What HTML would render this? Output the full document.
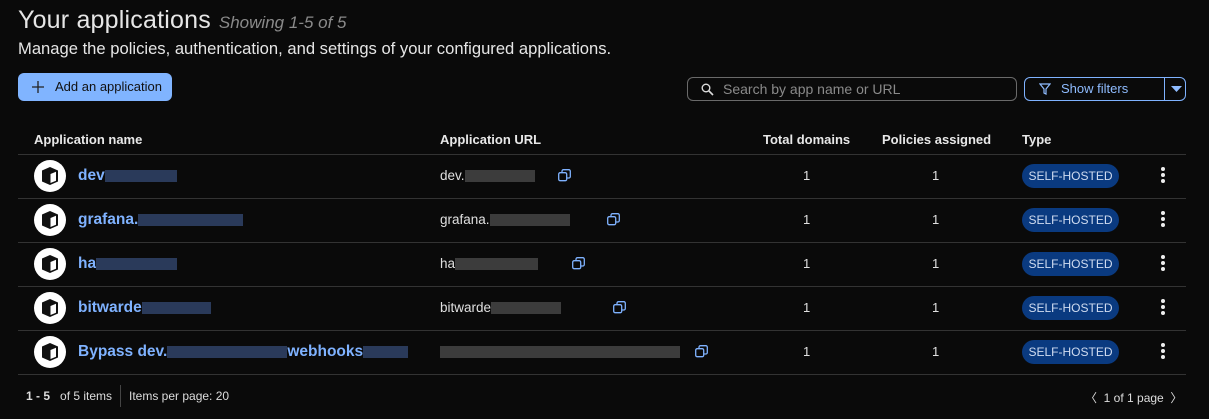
<!DOCTYPE html>
<html><head><meta charset="utf-8"><style>
*{box-sizing:border-box;margin:0;padding:0}
body{width:1209px;height:419px;background:#0a0a0a;color:#e8e8e8;font-family:"Liberation Sans",sans-serif;position:relative;overflow:hidden}
.a{position:absolute;white-space:nowrap}
h1{position:absolute;left:18px;top:6px;font-size:25px;font-weight:normal;color:#e6e6e6;letter-spacing:0.2px}
h1 span{font-size:17px;font-style:italic;color:#8a8a8a;margin-left:8px;letter-spacing:0}
.sub{left:18px;top:39px;font-size:16.6px;color:#e6e6e6}
.btn{left:18px;top:73px;width:154px;height:28px;background:#80b4ff;border-radius:6px;color:#111;font-size:13px;line-height:28px;padding-left:37px}
.search{left:687px;top:77px;width:330px;height:24px;border:1px solid #6a6a6a;border-radius:6px;color:#8a8a8a;font-size:14px;line-height:22px;padding-left:35px}
.filt{left:1024px;top:77px;width:162px;height:24px;border:1px solid #7fb2ff;border-radius:6px;color:#8fbcff;font-size:13px;line-height:22px;padding-left:36px}
.filt:after{content:"";position:absolute;left:139px;top:0;width:1px;height:22px;background:#7fb2ff}
.th{top:132px;font-size:13px;font-weight:bold;color:#e8e8e8}
.line{position:absolute;left:18px;width:1168px;height:1px;background:#333}
.ic{position:absolute;left:34px;width:32px;height:32px;border-radius:50%;background:#fff}
.name{left:78px;font-size:15.5px;color:#7fb2ff;font-weight:bold}
.url{left:440px;font-size:13.5px;color:#e0e0e0}
.n{font-size:13px;color:#e0e0e0}
.badge{left:1022px;width:97px;height:24px;border-radius:12px;background:#0a3a80;color:#d0dcf0;font-size:12px;line-height:24px;text-align:center}
.dots{left:1161px;width:4px}
.dots i{display:block;width:4px;height:4px;border-radius:2px;background:#eee;margin-bottom:2px}
.blk{display:inline-block;height:12px;vertical-align:middle}
.foot{top:389px;font-size:12px;color:#ddd}
</style></head><body>
<h1>Your applications<span>Showing 1-5 of 5</span></h1>
<div class="a sub">Manage the policies, authentication, and settings of your configured applications.</div>
<div class="a btn"><svg style="position:absolute;left:14px;top:8px" width="12" height="12"><path d="M6 0V12M0 6H12" stroke="#222" stroke-width="1.3"/></svg>Add an application</div>
<div class="a search"><svg style="position:absolute;left:13px;top:5px" width="13" height="13"><circle cx="5" cy="5" r="3.8" stroke="#ddd" stroke-width="1.4" fill="none"/><path d="M8 8L12 12" stroke="#ddd" stroke-width="1.6"/></svg>Search by app name or URL</div>
<div class="a filt"><svg style="position:absolute;left:14px;top:5px" width="12" height="12"><path d="M1 1H11L7 6V11L5 10V6Z" stroke="#8fbcff" fill="none" stroke-width="1.2"/></svg>Show filters<svg style="position:absolute;left:146px;top:8px" width="11" height="7"><path d="M0 0H11L5.5 6Z" fill="#8fbcff"/></svg></div>
<div class="a th" style="left:34px">Application name</div>
<div class="a th" style="left:440px">Application URL</div>
<div class="a th" style="left:763px">Total domains</div>
<div class="a th" style="left:882px">Policies assigned</div>
<div class="a th" style="left:1022px">Type</div>
<div class="line" style="top:154px"></div>
<div class="line" style="top:198px"></div>
<div class="line" style="top:242px"></div>
<div class="line" style="top:286px"></div>
<div class="line" style="top:330px"></div>
<div class="line" style="top:374px"></div>

<div id="rows"></div>
<script>
var rows=[["dev",120,"dev.",100,564],["grafana.",175,"grafana.",115,613],["ha",135,"ha",118,578],["bitwarde",115,"bitwarde",100,619],["Bypass dev.",0,"",0,701]];
var h="";
rows.forEach(function(r,i){var y=154+i*44;var c=y+22;
h+='<div class="ic" style="top:'+(c-16)+'px"><svg width="32" height="32"><path d="M8 10.5L16 7L24 10.5V21.5L16 25L8 21.5Z" fill="#111"/><path d="M16.5 14L22 11.8V20.8L16.5 23Z" fill="#fff"/></svg></div>';
var nm=r[0];
if(i==4){h+='<div class="a name" style="top:'+(c-9)+'px">Bypass dev.<span class="blk" style="width:120px;background:#2a3a5a"></span>webhooks<span class="blk" style="width:45px;background:#2a3a5a"></span></div>';
h+='<div class="a url" style="top:'+(c-8)+'px"><span class="blk" style="width:240px;background:#3c3c3c"></span></div>';}
else{h+='<div class="a name" style="top:'+(c-9)+'px">'+nm+'<span class="blk" style="width:'+r[1]*0.6+'px;background:#2a3a5a"></span></div>';
h+='<div class="a url" style="top:'+(c-8)+'px">'+r[2]+'<span class="blk" style="width:'+r[3]*0.7+'px;background:#3c3c3c"></span></div>';}
h+='<svg class="a" style="left:'+(r[4]-6)+'px;top:'+(c-7)+'px" width="13" height="13"><rect x="0.7" y="3.7" width="8" height="8" rx="1.5" stroke="#7fb2ff" fill="none" stroke-width="1.3"/><path d="M4 3V2.2A1.5 1.5 0 0 1 5.5 0.7H10.8A1.5 1.5 0 0 1 12.3 2.2V7.5A1.5 1.5 0 0 1 10.8 9H9" stroke="#7fb2ff" fill="none" stroke-width="1.3"/></svg>';
h+='<div class="a n" style="left:803px;top:'+(c-8)+'px">1</div><div class="a n" style="left:932px;top:'+(c-8)+'px">1</div>';
h+='<div class="a badge" style="top:'+(c-12)+'px">SELF-HOSTED</div>';
h+='<div class="a dots" style="top:'+(c-9)+'px"><i></i><i></i><i></i></div>';});
document.getElementById("rows").innerHTML=h;
</script>
<div class="a foot" style="left:26px"><b>1 - 5</b>&nbsp;&nbsp; of 5 items</div>
<div class="a" style="left:120px;top:385px;width:1px;height:22px;background:#444"></div>
<div class="a foot" style="left:129px">Items per page: 20</div>
<div class="a foot" style="left:1085px">〈&nbsp; 1 of 1 page &nbsp;〉</div>
</body></html>
